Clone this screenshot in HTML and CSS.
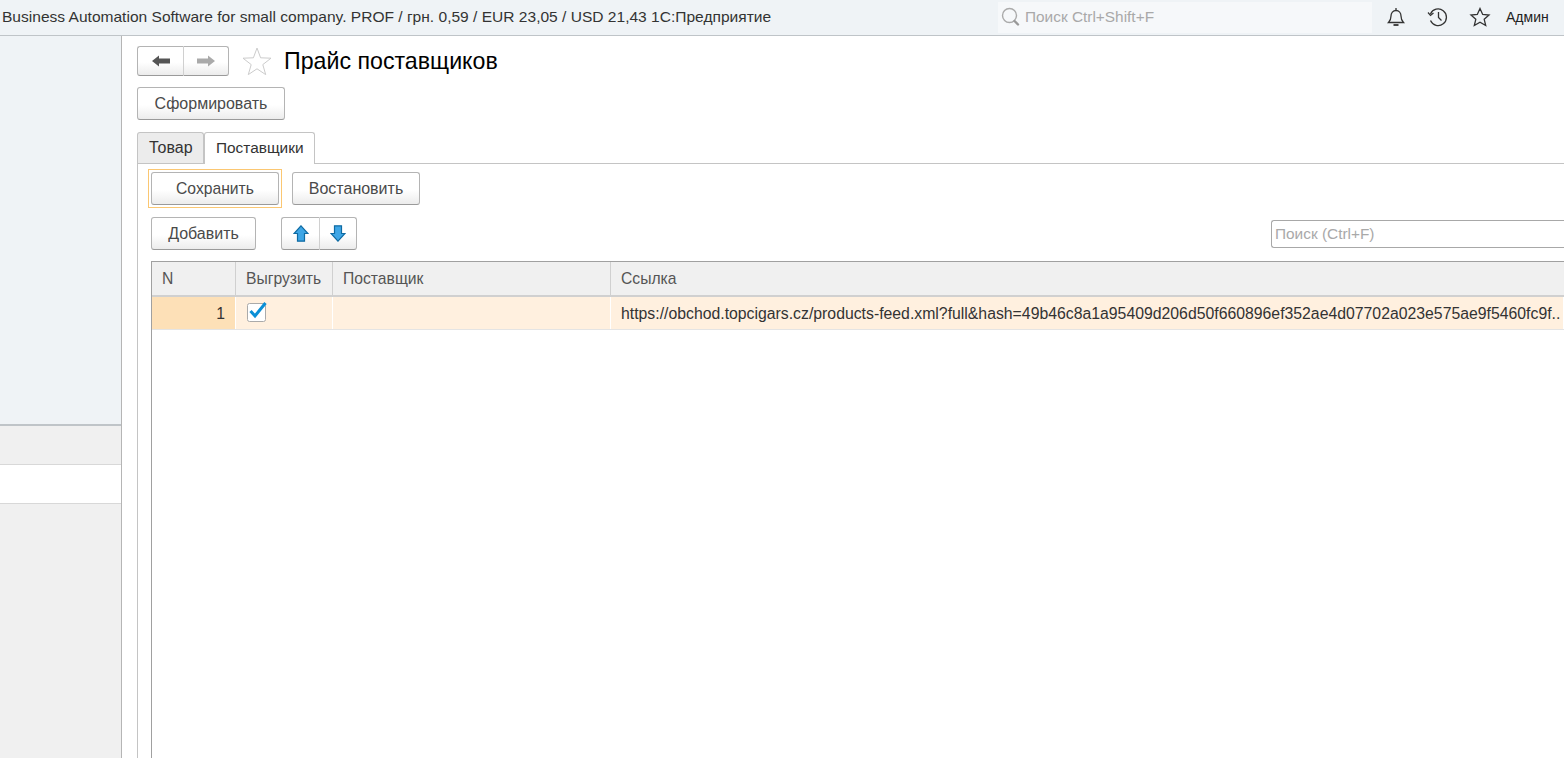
FILE: index.html
```html
<!DOCTYPE html>
<html lang="ru">
<head>
    <meta charset="UTF-8">
    <meta name="viewport" content="width=device-width, initial-scale=1.0">
    <title>Прайс поставщиков</title>
    <link rel="stylesheet" href="styles.css">
</head>
<body>
    <header class="topbar">
        <div class="app-title">Business Automation Software for small company. PROF / грн. 0,59 / EUR 23,05 / USD 21,43 1С:Предприятие</div>
        <div class="global-search">
            <svg class="search-icon" width="20" height="20" viewBox="0 0 20 20">
                <circle cx="8.5" cy="8.5" r="7" fill="none" stroke="#aaa" stroke-width="1.4"/>
                <path d="M13.5 14l3.5 3.5" stroke="#999" stroke-width="2.4" stroke-linecap="round"/>
            </svg>
            <span>Поиск Ctrl+Shift+F</span>
        </div>
        <div class="top-icons">
            <svg width="20" height="20" viewBox="0 0 20 20" fill="none" stroke="#333" stroke-width="1.3">
                <path d="M2.5 15.5c2-2 2.5-3.5 2.5-6.5 0-3 2-5.5 5-5.5s5 2.500 5 5.500c0 3 .5 4.500 2.500 6.500z"/>
                <path d="M10 1v2.500"/>
                <path d="M7.500 18h5" stroke-width="1.800"/>
            </svg>
            <svg width="22" height="20" viewBox="0 0 22 20" fill="none" stroke="#333" stroke-width="1.300">
                <path d="M3.500 7A8.300 8.300 0 1 1 3.500 13.500"/>
                <path d="M1 5.500l2.500 3 3-2.500" stroke-width="1.200"/>
                <path d="M11.500 5v5.500l3 3"/>
            </svg>
            <svg width="22" height="20" viewBox="0 0 22 20" fill="none" stroke="#333" stroke-width="1.300">
                <path d="M11 1.500l2.700 6 6.300.6-4.800 4.200 1.500 6.200-5.700-3.300-5.700 3.300 1.500-6.200L2 8.100l6.300-.6z"/>
            </svg>
            <span class="user-name">Админ</span>
        </div>
    </header>

    <div class="layout">
        <aside class="sidebar">
            <div class="side-top"></div>
            <div class="side-gray"></div>
            <div class="side-white"></div>
            <div class="side-rest"></div>
        </aside>

        <main class="content">
            <div class="title-row">
                <div class="btn-group nav-group">
                    <button class="btn icon-btn" type="button">
                        <svg width="18" height="12" viewBox="0 0 18 12"><path d="M0 6l7-5.500V3.500h11v5H7v3z" fill="#555"/></svg>
                    </button>
                    <button class="btn icon-btn" type="button">
                        <svg width="18" height="12" viewBox="0 0 18 12"><path d="M18 6l-7-5.500V3.500H0v5h11v3z" fill="#aaa"/></svg>
                    </button>
                </div>
                <svg class="fav-star" width="30" height="29" viewBox="0 0 30 29">
                    <path d="M15 1l3.600 9.800 10.400.4-8.200 6.400 2.900 10-8.700-5.800-8.700 5.800 2.900-10L1 11.200l10.400-.4z" fill="#fff" stroke="#ccc" stroke-width="1"/>
                </svg>
                <h1 class="page-title">Прайс поставщиков</h1>
            </div>

            <div class="command-row">
                <button class="btn form-btn" type="button">Сформировать</button>
            </div>

            <div class="tabs">
                <div class="tab">Товар</div>
                <div class="tab active">Поставщики</div>
            </div>

            <section class="tab-panel">
                <div class="save-row">
                    <div class="focus-frame">
                        <button class="btn save-btn" type="button">Сохранить</button>
                    </div>
                    <button class="btn restore-btn" type="button">Востановить</button>
                </div>

                <div class="toolbar">
                    <button class="btn add-btn" type="button">Добавить</button>
                    <div class="btn-group move-group">
                        <button class="btn icon-btn" type="button">
                            <svg width="16" height="17" viewBox="0 0 16 17"><path d="M8 .8l7 7.700h-3.500v7.700h-7V8.500H1z" fill="#3ea6e6" stroke="#0f6ba3" stroke-width="1.200"/></svg>
                        </button>
                        <button class="btn icon-btn" type="button">
                            <svg width="16" height="17" viewBox="0 0 16 17"><path d="M8 16.200l7-7.700h-3.500V.8h-7v7.700H1z" fill="#3ea6e6" stroke="#0f6ba3" stroke-width="1.200"/></svg>
                        </button>
                    </div>
                    <div class="table-search">Поиск (Ctrl+F)</div>
                </div>

                <div class="grid">
                    <div class="grid-row grid-head">
                        <div class="cell col-n">N</div>
                        <div class="cell col-check">Выгрузить</div>
                        <div class="cell col-supplier">Поставщик</div>
                        <div class="cell col-link">Ссылка</div>
                    </div>
                    <div class="grid-row grid-data">
                        <div class="cell col-n num-cell">1</div>
                        <div class="cell col-check">
                            <svg class="checkbox" width="21" height="22" viewBox="0 0 21 22">
                                <rect x="1.500" y="3.500" width="18" height="18" rx="2" fill="#fff" stroke="#aaa"/>
                                <path d="M4.500 11l4.500 5L19.500 3" fill="none" stroke="#0a8fd6" stroke-width="3"/>
                            </svg>
                        </div>
                        <div class="cell col-supplier"></div>
                        <div class="cell col-link link-text">https://obchod.topcigars.cz/products-feed.xml?full&amp;hash=49b46c8a1a95409d206d50f660896ef352ae4d07702a023e575ae9f5460fc9f..</div>
                    </div>
                </div>
            </section>
        </main>
    </div>
</body>
</html>
```

FILE: styles.css
```css
* {
    box-sizing: border-box;
}

html, body {
    height: 100%;
}

body {
    display: flex;
    flex-direction: column;
    margin: 0;
    overflow: hidden;
    background-color: #fff;
    color: #333;
    font-family: "Liberation Sans", Arial, sans-serif;
    font-size: 15.7px;
}

.topbar {
    display: flex;
    flex: none;
    align-items: center;
    height: 36px;
    padding-bottom: 2px;
    background-color: #eff3f6;
    border-bottom: 1px solid #bfc4c8;
}

.app-title {
    width: 998px;
    padding-left: 2px;
    font-size: 15.56px;
    white-space: nowrap;
}

.global-search {
    display: flex;
    align-items: center;
    width: 374px;
    height: 31px;
    margin-top: 1px;
    padding-left: 3px;
    background-color: #f6f8fa;
    color: #a9a9a9;
    font-size: 15.4px;
}

.search-icon {
    margin-right: 4px;
}

.top-icons {
    display: flex;
    align-items: center;
    padding-left: 14px;
}

.top-icons svg {
    margin-right: 20px;
}

.top-icons svg:nth-child(1) {
    margin-right: 21px;
}

.top-icons svg:nth-child(3) {
    margin-right: 15px;
}

.user-name {
    font-size: 14px;
    color: #222;
}

.layout {
    display: flex;
    flex: 1;
    min-height: 0;
}

.sidebar {
    display: flex;
    flex-direction: column;
    flex: none;
    width: 122px;
    border-right: 1px solid #b5b5b5;
    background-color: #f0f0f0;
}

.side-top {
    height: 390px;
    background-color: #eff3f6;
    border-bottom: 2px solid #bfc4c8;
}

.side-gray {
    height: 38px;
}

.side-white {
    height: 40px;
    background-color: #fff;
    border-top: 1px solid #d8d8d8;
    border-bottom: 1px solid #d8d8d8;
}

.side-rest {
    flex: 1;
}

.content {
    display: flex;
    flex-direction: column;
    flex: 1;
    min-width: 0;
    padding: 10px 0 0 15px;
}

.title-row {
    display: flex;
    flex: none;
    align-items: center;
    height: 30px;
}

.page-title {
    margin: 0 0 0 12px;
    font-size: 23.2px;
    font-weight: normal;
    color: #000;
}

.fav-star {
    margin-left: 13px;
}

.btn {
    flex: none;
    height: 33px;
    padding: 0;
    border: 1px solid #b4b4b4;
    border-bottom-color: #9a9a9a;
    border-radius: 3px;
    background: linear-gradient(to bottom, #fff 0%, #fff 55%, #ececec 100%);
    color: #4a4a4a;
    font-family: inherit;
    font-size: 16px;
}

.btn-group {
    display: flex;
    flex: none;
}

.btn-group .btn {
    display: flex;
    align-items: center;
    justify-content: center;
}

.btn-group .btn:first-child {
    border-right: 1px solid #d0d0d0;
    border-radius: 3px 0 0 3px;
}

.btn-group .btn:last-child {
    border-left: none;
    border-radius: 0 3px 3px 0;
}

.nav-group .btn {
    width: 45px;
    height: 30px;
}

.nav-group .btn:first-child {
    width: 47px;
}

.command-row {
    flex: none;
    margin-top: 11px;
}

.form-btn {
    width: 148px;
}

.tabs {
    display: flex;
    flex: none;
    margin-top: 12px;
    height: 32px;
}

.tab {
    width: 67px;
    height: 31px;
    padding-top: 6px;
    padding-left: 11px;
    background-color: #ececec;
    border: 1px solid #c4c4c4;
    border-bottom: none;
    border-radius: 3px 3px 0 0;
    font-size: 16px;
}

.tab.active {
    position: relative;
    width: 111px;
    height: 32px;
    background-color: #fff;
    font-size: 15.4px;
    z-index: 1;
}

.tab-panel {
    display: flex;
    flex-direction: column;
    flex: 1;
    min-height: 0;
    margin-top: -1px;
    padding: 5px 0 0 13px;
    border-top: 1px solid #c4c4c4;
    border-left: 1px solid #c4c4c4;
}

.save-row {
    display: flex;
    flex: none;
    align-items: center;
}

.focus-frame {
    padding: 2px;
    border: 1px solid #fbc772;
    margin-left: -3px;
}

.save-btn {
    display: block;
    width: 128px;
    font-size: 15.7px;
}

.restore-btn {
    width: 128px;
    margin-left: 10px;
}

.toolbar {
    display: flex;
    flex: none;
    align-items: flex-start;
    margin-top: 9px;
}

.add-btn {
    width: 105px;
}

.move-group {
    margin-left: 25px;
}

.move-group .btn {
    width: 37px;
}

.move-group .btn:first-child {
    width: 39px;
}

.table-search {
    flex: 1;
    height: 28px;
    margin-top: 3px;
    margin-left: 914px;
    padding: 4px 0 0 3px;
    border: 1px solid #a8a8a8;
    border-right: none;
    border-radius: 3px 0 0 3px;
    color: #a9a9a9;
    font-size: 15.4px;
    white-space: nowrap;
}

.grid {
    flex: 1;
    min-height: 0;
    margin-top: 11px;
    border-top: 1px solid #a0a0a0;
    border-left: 1px solid #a0a0a0;
}

.grid-row {
    display: flex;
}

.grid-head {
    height: 35px;
    background-color: #f0f0f0;
    border-bottom: 2px solid #d0d0d0;
}

.grid-data {
    height: 33px;
    background-color: #fff0df;
    border-bottom: 1px solid #e4e4e4;
}

.cell {
    display: flex;
    align-items: center;
    flex: none;
    padding-left: 10px;
    color: #555;
    white-space: nowrap;
    border-right: 1px solid #d0d0d0;
}

.grid-data .cell {
    padding-top: 1px;
    color: #333;
    border-right: 1px solid #fff;
}

.col-n {
    width: 84px;
}

.col-check {
    width: 97px;
}

.col-supplier {
    width: 278px;
}

.col-link {
    flex: 1;
    min-width: 0;
    overflow: hidden;
    border-right: none;
}

.link-text {
    font-size: 15.8px;
}

.grid-data .num-cell {
    justify-content: flex-end;
    padding-right: 10px;
    background-color: #fde0b7;
}

.checkbox {
    margin-top: -5px;
}
```
